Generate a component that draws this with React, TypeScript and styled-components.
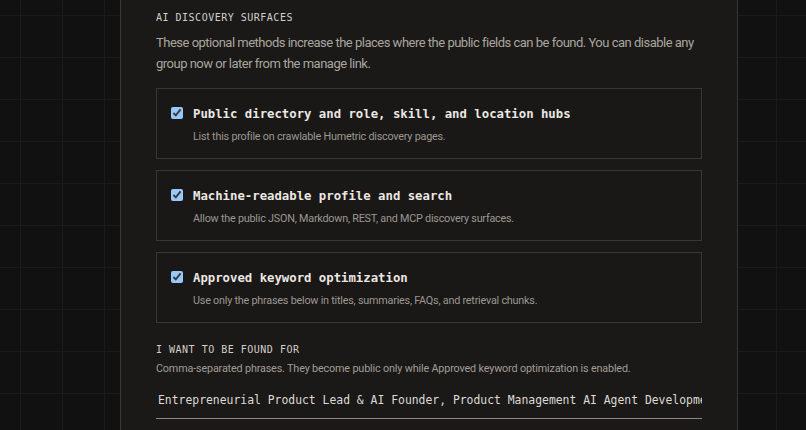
import React from "react";
import styled, { createGlobalStyle } from "styled-components";

const Global = createGlobalStyle`
  html, body { margin: 0; padding: 0; }
  body {
    background-color: #111111;
    background-image:
      linear-gradient(to right, #1b1b1b 1px, transparent 1px),
      linear-gradient(to bottom, #1b1b1b 1px, transparent 1px);
    background-size: 42px 42px;
    background-position: 20px 15px;
    color-scheme: dark;
    height: 430px;
    overflow: hidden;
  }
`;

const Page = styled.div`
  display: flex;
  justify-content: center;
  padding-left: 120px;
  padding-right: 68px;
  height: 430px;
  overflow: hidden;
`;

const Panel = styled.section`
  flex: 1;
  margin-top: -30px;
  min-height: 500px;
  background: #1b1918;
  border-left: 1px solid #3a3836;
  border-right: 1px solid #3a3836;
  padding: 41px 35px 0 35px;
  display: flex;
  flex-direction: column;
`;

const Eyebrow = styled.h3<{ $top?: number }>`
  margin: ${(p) => p.$top ?? 0}px 0 0;
  font-family: "DejaVu Sans Mono", monospace;
  font-weight: 400;
  font-size: 10px;
  letter-spacing: 0.5px;
  line-height: 14px;
  color: #d2cec8;
  text-transform: uppercase;
`;

const Lead = styled.p`
  margin: 7px 0 0;
  font-family: Roboto, "Noto Sans", sans-serif;
  font-size: 13px;
  line-height: 21px;
  color: #aaa59e;
  letter-spacing: -0.5px;
`;

const CardList = styled.div`
  display: flex;
  flex-direction: column;
  gap: 11px;
  margin-top: 14px;
`;

const Card = styled.label`
  display: flex;
  align-items: flex-start;
  gap: 10px;
  height: 71px;
  box-sizing: border-box;
  border: 1px solid #393735;
  background: #1a1817;
  padding: 18px 14px 0 14px;
  cursor: pointer;
`;

const Check = styled.input.attrs({ type: "checkbox" })`
  margin: 0;
  width: 12px;
  height: 12px;
  flex: none;
`;

const CardBody = styled.div`
  display: flex;
  flex-direction: column;
`;

const CardTitle = styled.div`
  font-family: "DejaVu Sans Mono", monospace;
  font-weight: 700;
  font-size: 12.3px;
  line-height: 15px;
  color: #ebe7e1;
`;

const CardDesc = styled.div`
  margin-top: 8px;
  font-family: Roboto, "Noto Sans", sans-serif;
  font-size: 10.8px;
  letter-spacing: -0.22px;
  line-height: 14px;
  color: #9c9791;
`;

const Hint = styled.p`
  margin: 5px 0 0;
  font-family: Roboto, "Noto Sans", sans-serif;
  font-size: 10.8px;
  letter-spacing: -0.16px;
  line-height: 14px;
  color: #a19c96;
`;

const KeywordInput = styled.input`
  margin-top: 14px;
  width: 100%;
  box-sizing: border-box;
  background: transparent;
  border: none;
  border-bottom: 1px solid #8c8883;
  padding: 3px 0 10px 2px;
  font-family: "DejaVu Sans Mono", monospace;
  font-size: 11.4px;
  line-height: 15px;
  color: #dedad4;
  outline: none;
`;

const surfaces = [
  {
    title: "Public directory and role, skill, and location hubs",
    desc: "List this profile on crawlable Humetric discovery pages.",
  },
  {
    title: "Machine-readable profile and search",
    desc: "Allow the public JSON, Markdown, REST, and MCP discovery surfaces.",
  },
  {
    title: "Approved keyword optimization",
    desc: "Use only the phrases below in titles, summaries, FAQs, and retrieval chunks.",
  },
];

export default function App() {
  return (
    <>
      <Global />
      <Page>
        <Panel>
          <Eyebrow>AI discovery surfaces</Eyebrow>
          <Lead>
            These optional methods increase the places where the public fields can be found. You can disable any
            group now or later from the manage link.
          </Lead>
          <CardList>
            {surfaces.map((s) => (
              <Card key={s.title}>
                <Check defaultChecked />
                <CardBody>
                  <CardTitle>{s.title}</CardTitle>
                  <CardDesc>{s.desc}</CardDesc>
                </CardBody>
              </Card>
            ))}
          </CardList>
          <Eyebrow $top={20}>I want to be found for</Eyebrow>
          <Hint>Comma-separated phrases. They become public only while Approved keyword optimization is enabled.</Hint>
          <KeywordInput
            readOnly
            value="Entrepreneurial Product Lead & AI Founder, Product Management AI Agent Development, AI Product Strategy"
          />
        </Panel>
      </Page>
    </>
  );
}
